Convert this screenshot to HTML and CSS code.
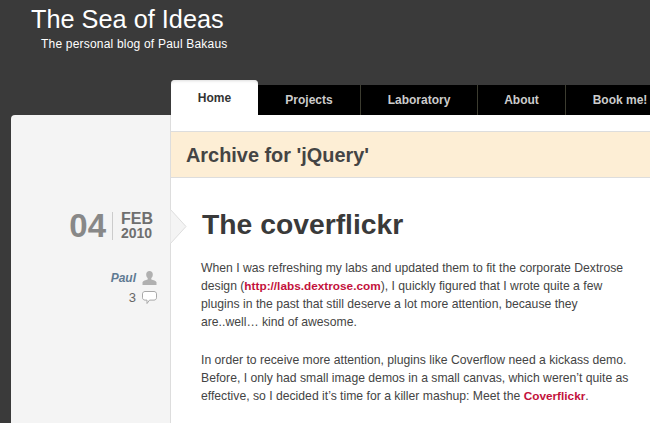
FILE: index.html
```html
<!DOCTYPE html>
<html lang="en">
<head>
    <meta charset="UTF-8">
    <title>The Sea of Ideas</title>
    <link rel="stylesheet" href="styles.css">
</head>
<body>
    <header class="site-header">
        <h1 class="site-title">The Sea of Ideas</h1>
        <p class="site-tagline">The personal blog of Paul Bakaus</p>
    </header>

    <nav class="main-nav">
        <a class="nav-item nav-home" href="#">Home</a>
        <a class="nav-item nav-projects" href="#">Projects</a>
        <a class="nav-item nav-lab" href="#">Laboratory</a>
        <a class="nav-item nav-about" href="#">About</a>
        <a class="nav-item nav-book" href="#">Book me!</a>
    </nav>

    <div class="page">
        <aside class="post-meta">
            <div class="post-date">
                <span class="date-day">04</span>
                <span class="date-rest">
                    <span class="date-month">FEB</span>
                    <span class="date-year">2010</span>
                </span>
            </div>
            <div class="meta-row meta-author">
                <a href="#">Paul</a>
                <svg class="meta-icon" width="15" height="16" viewBox="0 0 15 16">
                    <path d="M7.500 1c2.100 0 3.300 1.500 3.300 3.500 0 1.600-.7 2.900-1.500 3.600v1.300c2 .6 4.700 1.300 5.200 2.800V15H.500v-2.800c.5-1.500 3.200-2.200 5.200-2.800V8.100C4.900 7.400 4.200 6.100 4.200 4.500 4.200 2.500 5.400 1 7.500 1z" fill="#b0b0b0"/>
                </svg>
            </div>
            <div class="meta-row meta-comments">
                <span>3</span>
                <svg class="meta-icon" width="15" height="15" viewBox="0 0 15 15">
                    <path d="M3 1.500h9c1.300 0 2.500 1 2.500 2.300v4c0 1.300-1.200 2.300-2.500 2.300H7.500L5 13.500v-3.400H3C1.700 10.100.5 9.100.5 7.800v-4C.5 2.500 1.700 1.500 3 1.500z" fill="#fff" stroke="#a8a8a8"/>
                </svg>
            </div>
        </aside>

        <main class="content">
            <div class="archive-bar">
                <h2 class="archive-title">Archive for 'jQuery'</h2>
            </div>
            <article class="post">
                <svg class="post-arrow" width="17" height="35" viewBox="0 0 17 35">
                    <path d="M.500 .500 16 17.500 .500 34.500z" fill="#f4f4f4"/>
                    <path d="M.500 .500 16 17.500 .500 34.500" fill="none" stroke="#ddd"/>
                </svg>
                <h2 class="post-title">The coverflickr</h2>
                <p>When I was refreshing my labs and updated them to fit the corporate Dextrose<br>design (<a href="#">http://labs.dextrose.com</a>), I quickly figured that I wrote quite a few<br>plugins in the past that still deserve a lot more attention, because they<br>are..well… kind of awesome.</p>
                <p>In order to receive more attention, plugins like Coverflow need a kickass demo.<br>Before, I only had small image demos in a small canvas, which weren’t quite as<br>effective, so I decided it’s time for a killer mashup: Meet the <a href="#">Coverflickr</a>.</p>
            </article>
        </main>
    </div>
</body>
</html>
```

FILE: styles.css
```css
* {
    box-sizing: border-box;
}
html, body {
    height: 423px;
    overflow: hidden;
}
body {
    margin: 0;
    background-color: #3a3a3a;
    font-family: "Liberation Sans", Arial, sans-serif;
    color: #444;
}
.site-header {
    height: 80px;
    padding: 4px 0 0 31px;
    color: #fff;
}
.site-title {
    margin: 0;
    font-size: 25.3px;
    font-weight: normal;
    line-height: 30px;
}
.site-tagline {
    margin: 2px 0 0 10px;
    font-size: 12px;
    line-height: 16px;
    letter-spacing: 0.2px;
}

.main-nav {
    display: flex;
    height: 35px;
    margin-left: 171px;
    white-space: nowrap;
}
.nav-item {
    display: block;
    height: 30px;
    margin-top: 5px;
    line-height: 31px;
    background-color: #000;
    color: #ccc;
    font-size: 12px;
    font-weight: bold;
    text-align: center;
    text-decoration: none;
    border-right: 1px solid #3c3c30;
    flex: none;
}
.nav-home {
    width: 87px;
    height: 35px;
    margin-top: 0;
    line-height: 36px;
    background-color: #fff;
    color: #333;
    border-right: none;
    border-radius: 4px 4px 0 0;
    box-shadow: inset 0 3px 3px -2px #ddd;
}
.nav-projects { width: 103px; }
.nav-lab { width: 117px; }
.nav-about { width: 88px; }
.nav-book { width: 108px; border-right: none; }

.page {
    display: flex;
    height: 308px;
    margin-left: 11px;
    background-color: #f4f4f4;
    border-radius: 4px 0 0 0;
}
.post-meta {
    width: 159px;
    padding: 97px 13px 0 0;
    flex: none;
}
.post-date {
    display: flex;
    justify-content: flex-end;
    align-items: center;
    height: 28px;
    margin-right: 4px;
    color: #888;
}
.date-day {
    padding-right: 6px;
    border-right: 1px solid #ccc;
    font-size: 33px;
    font-weight: bold;
    line-height: 28px;
}
.date-rest {
    display: flex;
    flex-direction: column;
    padding-left: 8px;
    color: #6f6f6f;
    font-weight: bold;
}
.date-month {
    font-size: 16px;
    line-height: 14px;
}
.date-year {
    font-size: 14px;
    line-height: 14px;
}
.meta-row {
    display: flex;
    justify-content: flex-end;
    align-items: center;
    gap: 6px;
    height: 20px;
    font-size: 12px;
    color: #666;
}
.meta-author {
    height: 19px;
    margin-top: 28px;
}
.meta-author a {
    color: #5f7a93;
    font-weight: bold;
    font-style: italic;
    text-decoration: none;
}
.meta-comments {
    font-size: 13px;
}
.meta-icon {
    display: block;
    flex: none;
}

.content {
    flex: 1;
    background-color: #fff;
    border-left: 1px solid #ddd;
    padding-top: 16px;
}
.archive-bar {
    height: 47px;
    padding-left: 15px;
    background-color: #fdeed5;
    border-top: 1px solid #ddd;
    border-bottom: 1px solid #ddd;
}
.archive-title {
    margin: 0;
    font-size: 19.9px;
    line-height: 47px;
    color: #444;
}
.post {
    position: relative;
    padding: 30px 0 0 30px;
    font-size: 12.2px;
    line-height: 18px;
    white-space: nowrap;
}
.post-arrow {
    position: absolute;
    left: -1px;
    top: 31px;
    display: block;
}
.post-title {
    margin: 0 0 19px 1px;
    font-size: 28.3px;
    line-height: 32px;
    color: #3a3a3a;
}
.post p {
    margin: 0 0 20px;
}
.post a {
    color: #c3123c;
    font-size: 11.8px;
    font-weight: bold;
    text-decoration: none;
}
```
